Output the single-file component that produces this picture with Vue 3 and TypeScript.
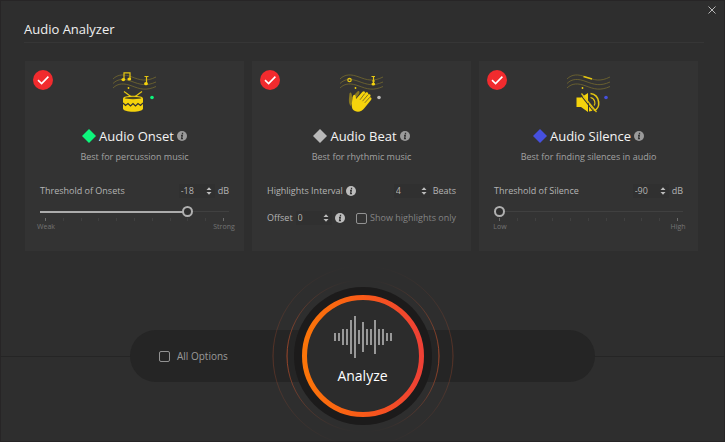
<script setup lang="ts">
import { computed, ref } from 'vue'

type Kind = 'onset' | 'beat' | 'silence'

interface Mode {
  id: Kind
  name: string
  summary: string
  color: string
}

interface Threshold {
  label: string
  low: string
  high: string
}

const modes: Mode[] = [
  { id: 'onset', name: 'Audio Onset', summary: 'Best for percussion music', color: '#0df57c' },
  { id: 'beat', name: 'Audio Beat', summary: 'Best for rhythmic music', color: '#b9b9b9' },
  { id: 'silence', name: 'Audio Silence', summary: 'Best for finding silences in audio', color: '#4650de' },
]

const thresholds: Record<string, Threshold> = {
  onset: { label: 'Threshold of Onsets', low: 'Weak', high: 'Strong' },
  silence: { label: 'Threshold of Silence', low: 'Low', high: 'High' },
}

const levels = ref<Record<string, number>>({ onset: -18, silence: -90 })
const enabled = ref<Record<Kind, boolean>>({ onset: true, beat: true, silence: true })
const interval = ref(4)
const offset = ref(0)
const highlightsOnly = ref(false)
const allOptions = ref(false)

const fill = computed(() => (id: string) => `${((levels.value[id] + 90) / 90) * 100}%`)

// x, half height
const wave: [number, number][] = [
  [-28, 4], [-24, 4], [-20, 8], [-16, 8], [-12, 17], [-8, 21], [-4, 7], [0, 15],
  [4, 8], [8, 8], [12, 17], [16, 8], [20, 8], [24, 4], [28, 4],
]
</script>

<template>
  <main class="window">
    <header class="titlebar">
      <h1>Audio Analyzer</h1>
      <button class="close" type="button" aria-label="Close">
        <svg viewBox="0 0 8 8"><path d="M0.5 0.5 7.5 7.5M7.5 0.5 0.5 7.5" /></svg>
      </button>
    </header>

    <section class="cards">
      <article v-for="mode in modes" :key="mode.id" class="card">
        <label class="toggle">
          <input v-model="enabled[mode.id]" type="checkbox" :aria-label="mode.name" />
          <svg viewBox="0 0 20 20"><path d="M5 10.2 8.6 13.6 15.4 6.6" /></svg>
        </label>

        <svg class="art" viewBox="0 0 44 42">
          <g class="staff">
            <path d="M0 8C5 3 11 3 19 6S33 11 43 6" />
            <path d="M0 12.5C5 7.500 11 7.500 19 10.500S33 15.500 43 11" />
            <path d="M0 17C5 12 11 12 19 15S33 20 43 15.500" />
          </g>
          <circle cx="15.500" cy="17" r="0.900" class="solid" />
          <circle cx="39" cy="26.500" r="1.800" :fill="mode.color" />

          <g v-if="mode.id === 'onset'">
            <path class="line" d="M11 8.500V1.800H17V8" />
            <ellipse class="solid" cx="10.300" cy="8.600" rx="1.900" ry="1.600" />
            <ellipse class="solid" cx="16.300" cy="8" rx="1.900" ry="1.600" />
            <path class="line" d="M31.500 5.500H35.500M33.500 5.500V12" />
            <ellipse class="solid" cx="33" cy="12.700" rx="1.900" ry="1.600" />
            <path class="line" d="M11 20.500 18.500 26M29 20.500 21.500 26" />
            <path class="solid" d="M10 27.500C10 25.700 14.500 24.700 20 24.700S30 25.700 30 27.500V37.500C30 39.500 25.500 40.700 20 40.700S10 39.500 10 37.500Z" />
            <ellipse class="hollow" cx="20" cy="27" rx="8.500" ry="1.200" />
            <path class="cut" d="M10 32 12.500 34.500 15 32.500 17.500 35 20 32.500 22.500 35 25 32.500 27.500 34.500 30 32" />
          </g>

          <g v-else-if="mode.id === 'beat'">
            <circle class="line" cx="9.500" cy="9" r="1.700" />
            <path class="line" d="M31.500 5.500H35M33.500 5.500V13M32 10H35" />
            <ellipse class="solid" cx="33.300" cy="13" rx="1.800" ry="1.500" />
            <path class="shade" d="M10.500 35C8 31 9 28 9.500 22.500C10.500 20.500 12 22 12 26L18 20C20 20 20 22 18 24.500L13 31Z" />
            <path class="solid" d="M12.500 38C10.800 33.500 12.500 30 13 25.500C13.300 23.500 15.800 23.500 15.800 26L16 28 22.500 20.800C24 19.500 25.800 20.800 24.700 22.500L25.500 21.800C27.500 20.500 29 22.200 27.800 23.800L28 23.600C30 22.500 31.500 24.200 30 26L29.600 26.400C31.300 26 32.200 27.700 31 29L24.500 37C21.500 41.500 15.500 41.800 12.500 38Z" />
            <path class="cut fine" d="M20 28.800 24.700 22.600M22.500 30.200 27.800 24M24.800 31.800 29.800 26.300" />
          </g>

          <g v-else>
            <path class="line thick" d="M16.500 5.500 25 8" />
            <path class="solid" d="M9.500 26.500H14L21 22V41L14 36H9.500Z" />
            <path class="line thick" d="M23.500 22.500C33.500 24 34 37.500 27 39.500" />
            <path class="line" d="M23.500 26.500C28.500 27.500 28.500 33 27 34.500" />
            <path class="solid" d="M22 32 27 39.500 22 40.500Z" />
            <path class="cut" d="M12.500 22.500 27 41" />
            <path class="line" d="M14.500 22.500 29.500 41" />
          </g>
        </svg>

        <h2>
          <svg class="gem" viewBox="0 0 16 16"><path d="M8 0 16 8 8 16 0 8Z" :fill="mode.color" /></svg>
          <span>{{ mode.name }}</span>
          <svg class="info" viewBox="0 0 10 10"><circle cx="5" cy="5" r="5" /><path d="M5.500 1.800V3.200M4 4.500H5.300L4.600 7.700H6" /></svg>
        </h2>
        <p class="summary">{{ mode.summary }}</p>

        <template v-if="mode.id !== 'beat'">
          <div class="row">
            <label :for="`${mode.id}-value`">{{ thresholds[mode.id].label }}</label>
            <span class="spin push">
              <input :id="`${mode.id}-value`" v-model.number="levels[mode.id]" type="number" min="-90" max="0" />
              <svg viewBox="0 0 6 8"><path d="M0.500 3 3 0.300 5.500 3ZM0.500 5 3 7.700 5.500 5Z" /></svg>
            </span>
            <span class="unit">dB</span>
          </div>
          <input
            v-model.number="levels[mode.id]"
            class="slider"
            type="range"
            min="-90"
            max="0"
            :aria-label="thresholds[mode.id].label"
            :style="{ '--fill': fill(mode.id) }"
          />
          <div class="ticks"><i v-for="n in 11" :key="n"></i></div>
          <div class="ends">
            <span>{{ thresholds[mode.id].low }}</span>
            <span>{{ thresholds[mode.id].high }}</span>
          </div>
        </template>

        <template v-else>
          <div class="row">
            <label for="interval">Highlights Interval</label>
            <svg class="info bright" viewBox="0 0 10 10"><circle cx="5" cy="5" r="5" /><path d="M5.500 1.800V3.200M4 4.500H5.300L4.600 7.700H6" /></svg>
            <span class="spin push">
              <input id="interval" v-model.number="interval" type="number" min="1" />
              <svg viewBox="0 0 6 8"><path d="M0.500 3 3 0.300 5.500 3ZM0.500 5 3 7.700 5.500 5Z" /></svg>
            </span>
            <span class="unit">Beats</span>
          </div>
          <div class="row second">
            <label for="offset">Offset</label>
            <span class="spin">
              <input id="offset" v-model.number="offset" type="number" />
              <svg viewBox="0 0 6 8"><path d="M0.500 3 3 0.300 5.500 3ZM0.500 5 3 7.700 5.500 5Z" /></svg>
            </span>
            <svg class="info bright" viewBox="0 0 10 10"><circle cx="5" cy="5" r="5" /><path d="M5.500 1.800V3.200M4 4.500H5.300L4.600 7.700H6" /></svg>
            <label class="check push"><input v-model="highlightsOnly" type="checkbox" />Show highlights only</label>
          </div>
        </template>
      </article>
    </section>

    <footer class="dock">
      <div class="pill">
        <label class="check wide"><input v-model="allOptions" type="checkbox" />All Options</label>
      </div>
      <svg class="halo" viewBox="-92 -92 184 184">
        <defs>
          <linearGradient id="halo-fade" x1="0" y1="0" x2="0" y2="1">
            <stop offset="0" stop-color="#d4562c" stop-opacity="0" />
            <stop offset="0.500" stop-color="#d4562c" />
            <stop offset="1" stop-color="#d4562c" stop-opacity="0" />
          </linearGradient>
          <linearGradient id="ring-color" x1="0" y1="0" x2="1" y2="0">
            <stop offset="0" stop-color="#fb7509" />
            <stop offset="0.500" stop-color="#f95a18" />
            <stop offset="1" stop-color="#ee4035" />
          </linearGradient>
        </defs>
        <circle r="90" stroke="url(#halo-fade)" opacity="0.300" />
        <circle r="76" stroke="url(#halo-fade)" opacity="0.700" />
        <circle r="69" class="rim" />
        <circle r="58.500" class="ring" stroke="url(#ring-color)" />
      </svg>
      <button class="analyze" type="button">
        <svg viewBox="-30 -22 60 44">
          <path v-for="[x, h] in wave" :key="x" :d="`M${x} ${-h}V${h}`" />
        </svg>
        <span>Analyze</span>
      </button>
    </footer>
  </main>
</template>

<style>
body {
  background: #2e2e2e;
}
</style>

<style scoped>
* {
  box-sizing: border-box;
}

.window {
  display: flex;
  flex-direction: column;
  min-height: 100vh;
  overflow: hidden;
  background: #2e2e2e;
  box-shadow: inset 0 0 0 1px #272526;
  color: #b4b4b4;
  font: 9px/14px "Open Sans", "Noto Sans", sans-serif;
}

button,
input {
  margin: 0;
  padding: 0;
  border: 0;
  background: none;
  color: inherit;
  font: inherit;
}

svg {
  display: block;
  flex: none;
}

.titlebar {
  display: flex;
  align-items: flex-end;
  height: 43px;
  margin: 0 21px 0 24px;
  padding-bottom: 3px;
  border-bottom: 1px solid #363636;
}

h1 {
  margin: 0;
  color: #f0f0f0;
  font-size: 13px;
  font-weight: 400;
  line-height: 20px;
}

.close {
  align-self: flex-start;
  margin: 6px -12px 0 auto;
  width: 8px;
  height: 8px;
}

.close path {
  fill: none;
  stroke: #b8b8b8;
}

.cards {
  display: grid;
  grid-template-columns: repeat(3, 1fr);
  gap: 8px;
  margin: 18px 27px 0 25px;
}

.card {
  position: relative;
  min-height: 190px;
  padding: 10px 15px 0;
  background: #333333;
}

.toggle {
  position: absolute;
  top: 9px;
  left: 8px;
}

.toggle input {
  position: absolute;
  inset: 0;
  opacity: 0;
}

.toggle svg {
  width: 20px;
  height: 20px;
  border-radius: 50%;
  background: #f12b2e;
}

.toggle path {
  fill: none;
  stroke: #ffffff;
  stroke-width: 1.6;
}

.art {
  width: 44px;
  height: 42px;
  margin: 0 auto;
}

.staff {
  fill: none;
  stroke: #75692f;
  stroke-width: 0.8;
}

.solid {
  fill: #f5d30c;
}

.shade {
  fill: #8a7a20;
}

.line {
  fill: none;
  stroke: #e4c511;
  stroke-width: 1.2;
}

.thick {
  stroke-width: 1.6;
}

.hollow {
  fill: #4d4722;
}

.cut {
  fill: none;
  stroke: #333333;
  stroke-width: 1.2;
}

.fine {
  stroke-width: 0.6;
}

h2 {
  display: flex;
  align-items: center;
  justify-content: center;
  gap: 3px;
  margin: 13px 0 0;
  color: #f4f4f4;
  font-size: 13px;
  font-weight: 400;
  line-height: 20px;
}

.gem {
  width: 14px;
  height: 14px;
}

.info {
  width: 10px;
  height: 10px;
}

.info circle {
  fill: #9a9a9a;
}

.info path {
  fill: none;
  stroke: #333333;
  stroke-width: 1.3;
}

.bright circle {
  fill: #bdbdbd;
}

.summary {
  margin: 4px 0 0;
  color: #a2a2a2;
  text-align: center;
}

.row {
  display: flex;
  align-items: center;
  gap: 3px;
  height: 16px;
  margin-top: 19px;
  white-space: nowrap;
}

.second {
  margin-top: 11px;
}

.push {
  margin-left: auto;
}

.spin {
  display: flex;
  align-items: center;
  width: 36px;
  height: 14px;
  padding-right: 3px;
  background: #303030;
}

.spin input {
  flex: 1;
  min-width: 0;
  height: 14px;
  padding-left: 2px;
  appearance: textfield;
}

.spin input::-webkit-inner-spin-button {
  display: none;
}

.spin svg {
  width: 6px;
  height: 8px;
  fill: #bdbdbd;
}

.info + .check {
  color: #838383;
}

.check {
  display: flex;
  align-items: center;
  gap: 3px;
}

.check input {
  width: 11px;
  height: 11px;
  border: 1px solid #929292;
  border-radius: 2px;
  appearance: none;
}

.slider {
  display: block;
  width: 100%;
  height: 11px;
  margin-top: 7px;
  background: linear-gradient(#acacac, #acacac) 0 5px / var(--fill) 2px no-repeat,
    linear-gradient(#404040, #404040) 0 5px / 100% 1px no-repeat;
  appearance: none;
}

.slider::-webkit-slider-thumb {
  width: 11px;
  height: 11px;
  border: 2px solid #b0b0b0;
  border-radius: 50%;
  background: #2e2e2e;
  appearance: none;
}

.ticks {
  display: flex;
  justify-content: space-between;
  margin: 1px 5px 0;
}

.ticks i {
  width: 1px;
  height: 3px;
  background: #404040;
}

.ticks i:first-child,
.ticks i:last-child {
  background: #6c6c6c;
}

.ends {
  display: flex;
  justify-content: space-between;
  margin: 1px -7px 0 -6px;
  color: #747474;
  font-size: 7px;
  line-height: 9px;
}

.ends span {
  width: 24px;
  text-align: center;
}

.dock {
  display: grid;
  align-items: center;
  justify-items: center;
  height: 172px;
  margin-top: auto;
  background: linear-gradient(#252525, #252525) 0 86px / 100% 1px no-repeat;
}

.dock > * {
  grid-area: 1 / 1;
}

.pill {
  display: flex;
  align-items: center;
  justify-self: stretch;
  height: 52px;
  margin: 0 130px;
  padding-left: 29px;
  border-radius: 26px;
  background: #252525;
}

.wide {
  gap: 7px;
  color: #9a9a9a;
  font-size: 10px;
}

.halo {
  width: 184px;
  height: 184px;
  margin: -6px 0;
  fill: none;
}

.rim {
  fill: #1c1b1b;
}

.ring {
  fill: #2c2c2c;
  stroke-width: 5;
}

.analyze {
  display: flex;
  flex-direction: column;
  align-items: center;
  gap: 7px;
  width: 112px;
  height: 112px;
  padding-top: 15px;
  border-radius: 50%;
  color: #ffffff;
  font-size: 14px;
  line-height: 20px;
}

.analyze svg {
  width: 60px;
  height: 44px;
}

.analyze path {
  stroke: #c8c8c8;
  stroke-width: 1.4;
}
</style>
